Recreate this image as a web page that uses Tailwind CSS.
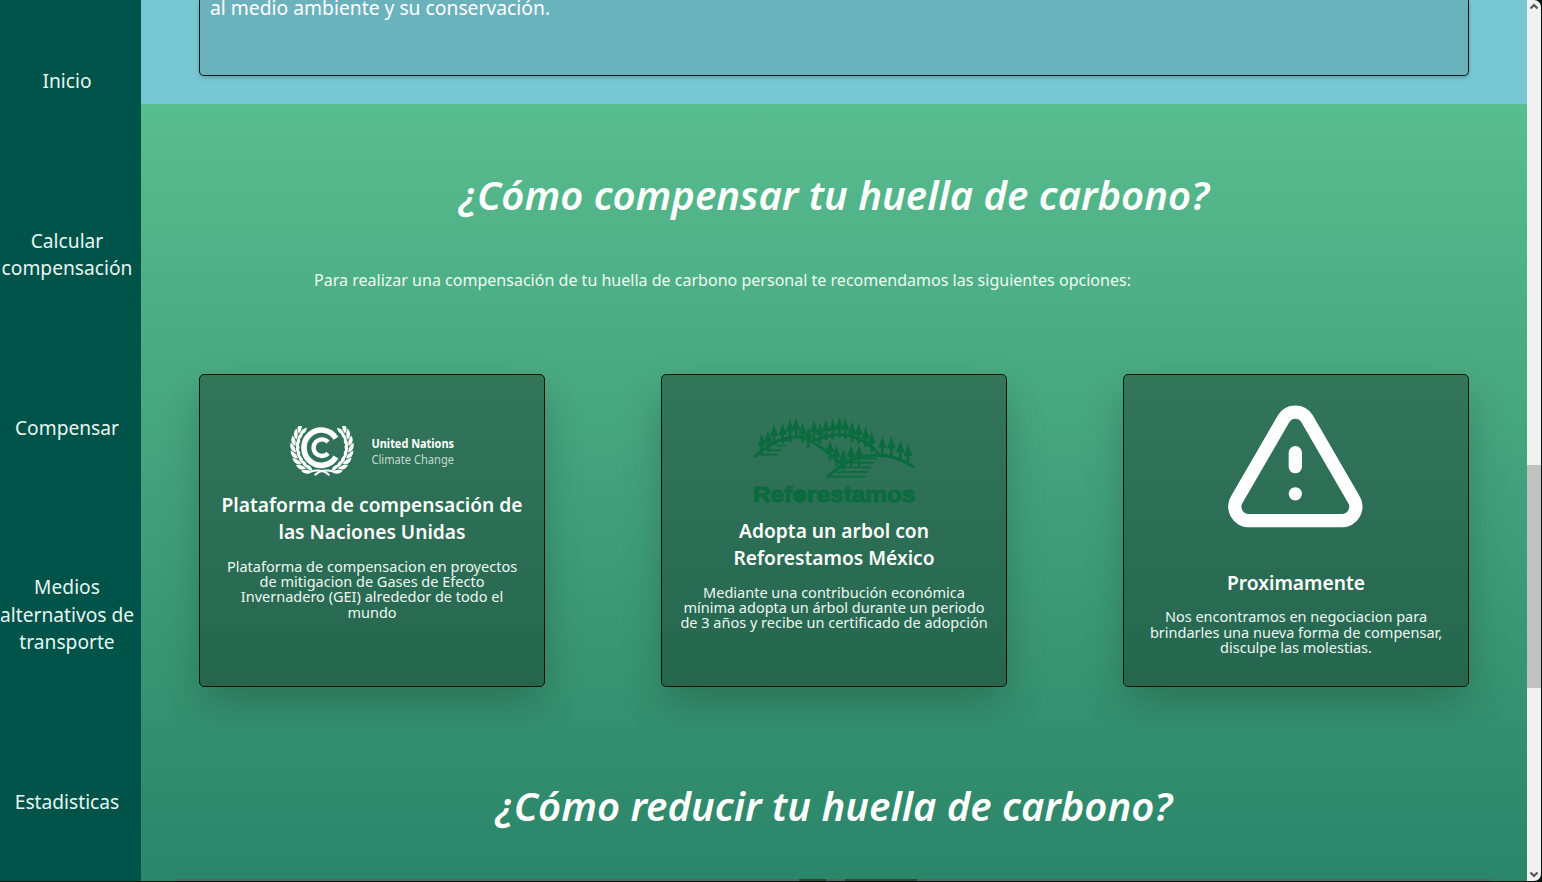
<!DOCTYPE html>
<html lang="es">
<head>
<meta charset="utf-8">
<title>Huella de carbono</title>
<script src="https://cdn.jsdelivr.net/npm/@tailwindcss/browser@4"></script>
</head>
<body class="h-[882px] w-[1542px] overflow-hidden bg-[#07120f] pr-px pb-px font-['Noto_Sans',sans-serif] text-white">
<div class="relative flex h-[881px] overflow-hidden">
  <nav class="flex w-[141px] shrink-0 flex-col gap-[132px] bg-[#005349] pt-[67px] pr-[7px] text-center text-[19.2px] leading-[27.5px] whitespace-nowrap text-[#e6f6f3]">
    <a>Inicio</a>
    <a>Calcular<br>compensación</a>
    <a>Compensar</a>
    <a>Medios<br>alternativos de<br>transporte</a>
    <a>Estadisticas</a>
  </nav>

  <main class="flex h-[881px] w-[1386px] shrink-0 flex-col overflow-hidden">
    <section class="h-[104px] shrink-0 bg-[#77c8d3] px-[58px]">
      <div class="flow-root h-[76px] rounded-b-[5px] border border-t-0 border-[#031413] bg-black/10 pl-[10px] shadow-[0_2px_4px_rgba(0,0,0,0.2)]">
        <p class="-mt-[6px] text-[19.3px] leading-7">al medio ambiente y su conservación.</p>
      </div>
    </section>

    <section class="flex h-[777px] shrink-0 flex-col bg-linear-to-b from-[#58bd8f] to-[#2b8569] pt-[66px]">
      <h2 class="text-center text-[40px] leading-[49px] font-semibold italic">¿Cómo compensar tu huella de carbono?</h2>
      <p class="mt-[49px] pl-[173px] text-[16.05px] leading-6 text-[#effaf4]">Para realizar una compensación de tu huella de carbono personal te recomendamos las siguientes opciones:</p>

      <div class="mt-[82px] flex gap-[116px] px-[58px] text-center whitespace-nowrap">
        <article class="h-[313px] w-[346px] rounded-[5px] border border-[#04150f] bg-black/30 shadow-[0_18px_40px_-2px_rgba(0,0,0,0.22)]">
          <div class="flex h-[116px] gap-[18px] pt-[51px] pl-[90px]">
            <svg class="h-[52px] w-[64px]" viewBox="60 47 192 156" fill="none">
              <defs>
                <g id="leaf" fill="#fff">
                  <path d="M-79 11Q-100 4-93-19Q-79-9-79 11Z"/>
                  <path d="M-76 11Q-62 0-71-18Q-83-5-76 11Z"/>
                </g>
                <g id="branch">
                  <use href="#leaf" transform="rotate(38)"/><use href="#leaf" transform="rotate(24)"/><use href="#leaf" transform="rotate(10)"/><use href="#leaf" transform="rotate(-4)"/><use href="#leaf" transform="rotate(-18)"/><use href="#leaf" transform="rotate(-32)"/><use href="#leaf" transform="rotate(-46)"/><use href="#leaf" transform="rotate(-60)"/>
                  <path d="M-36 74Q0 64 22 85" stroke="#fff" stroke-width="6"/>
                </g>
              </defs>
              <path d="M198 84A52 53 0 1 0 198 140" stroke="#fff" stroke-width="17"/>
              <path d="M174 95A25 25 0 1 0 174 129" stroke="#fff" stroke-width="13"/>
              <use href="#branch" transform="translate(156 110)"/>
              <use href="#branch" transform="translate(156 110) scale(-1 1)"/>
            </svg>
            <svg class="h-[50px] w-[86px]" viewBox="0 0 86 50" fill="#fff">
              <text x="-0.5" y="22" font-size="11.6" font-weight="700" textLength="82.5" lengthAdjust="spacingAndGlyphs">United Nations</text>
              <text x="-0.5" y="37.5" font-size="11.8" fill="#c3dcd2" textLength="82.5" lengthAdjust="spacingAndGlyphs">Climate Change</text>
            </svg>
          </div>
          <h3 class="text-[19.2px] leading-[27.3px] font-semibold">Plataforma de compensación de<br>las Naciones Unidas</h3>
          <p class="mt-[13px] text-[14.5px] leading-[15.35px] text-[#edf7f2]">Plataforma de compensacion en proyectos<br>de mitigacion de Gases de Efecto<br>Invernadero (GEI) alrededor de todo el<br>mundo</p>
        </article>

        <article class="h-[313px] w-[346px] rounded-[5px] border border-[#04150f] bg-black/30 shadow-[0_18px_40px_-2px_rgba(0,0,0,0.22)]">
          <div class="flex h-[142px] pt-[30px] pl-[78px]">
            <svg class="h-[110px] w-[190px]" viewBox="0 0 570 330" fill="#0a6b3e" stroke="#0a6b3e">
              <defs>
                <path id="tree" stroke="none" d="M0 0Q5 18 13 36H4V62H-4V36H-13Q-5 18 0 0Z"/>
              </defs>
              <g fill="none" stroke-width="9">
                <path d="M42 157Q110 95 170 95Q215 96 305 178"/>
                <path d="M225 107Q300 70 365 106Q395 124 418 146"/>
                <path d="M260 218Q300 178 350 160Q435 130 523 187"/>
              </g>
              <path fill="none" stroke-width="5" d="M128 108h30M108 122h30M84 136h38M60 149h52M348 160h64M328 173h75M308 187h84M288 201h97M262 215h114"/>
              <use href="#tree" x="65" y="86"/><use href="#tree" x="84" y="76"/><use href="#tree" x="102" y="58"/><use href="#tree" x="128" y="54"/><use href="#tree" x="150" y="43"/><use href="#tree" x="168" y="38"/><use href="#tree" x="188" y="52"/><use href="#tree" x="205" y="66"/><use href="#tree" x="222" y="46"/><use href="#tree" x="240" y="54"/><use href="#tree" x="258" y="43"/><use href="#tree" x="278" y="41"/><use href="#tree" x="298" y="36"/><use href="#tree" x="316" y="39"/><use href="#tree" x="336" y="50"/><use href="#tree" x="356" y="54"/><use href="#tree" x="377" y="65"/><use href="#tree" x="395" y="79"/>
              <use href="#tree" x="270" y="106"/><use href="#tree" x="289" y="120"/><use href="#tree" x="310" y="132"/><use href="#tree" x="333" y="120"/><use href="#tree" x="357" y="120"/>
              <use href="#tree" x="427" y="92"/><use href="#tree" x="454" y="94"/><use href="#tree" x="481" y="106"/><use href="#tree" x="504" y="116"/>
              <text x="39" y="290" font-family="Liberation Sans, sans-serif" font-weight="700" font-size="67" stroke-width="3" textLength="487" lengthAdjust="spacingAndGlyphs">Reforestamos</text>
              <path stroke="none" d="M160 262Q170 266 174 260Q178 246 188 254Q184 264 178 266Q186 268 190 262V282Q174 296 162 282Z"/>
            </svg>
          </div>
          <h3 class="text-[19.2px] leading-[27.3px] font-semibold">Adopta un arbol con<br>Reforestamos México</h3>
          <p class="mt-[13px] text-[14.5px] leading-[15.35px] text-[#edf7f2]">Mediante una contribución económica<br>mínima adopta un árbol durante un periodo<br>de 3 años y recibe un certificado de adopción</p>
        </article>

        <article class="h-[313px] w-[346px] rounded-[5px] border border-[#04150f] bg-black/30 shadow-[0_18px_40px_-2px_rgba(0,0,0,0.22)]">
          <div class="flex h-[194px] pt-[15px] pl-[86px]">
            <svg class="h-[150px] w-[170px]" viewBox="0 0 510 450" fill="none" stroke="#fff" stroke-width="40" stroke-linecap="round" stroke-linejoin="round">
              <path d="M221 86L82 326A42 42 0 0 0 118 392H394A42 42 0 0 0 430 326L291 86A41 41 0 0 0 221 86Z"/>
              <path d="M256 188V230M256 311.500V311.510"/>
            </svg>
          </div>
          <h3 class="text-[19.2px] leading-[27.3px] font-semibold">Proximamente</h3>
          <p class="mt-[13px] text-[14.5px] leading-[15.35px] text-[#edf7f2]">Nos encontramos en negociacion para<br>brindarles una nueva forma de compensar,<br>disculpe las molestias.</p>
        </article>
      </div>

      <h2 class="mt-[94px] text-center text-[40px] leading-[49px] font-semibold italic">¿Cómo reducir tu huella de carbono?</h2>
      <div class="mt-auto mr-[35px] ml-[35px] flex h-[2px] shrink-0 bg-[#4b6a60]">
        <div class="ml-[623px] w-[27px] bg-[#2b4a2f]"></div>
        <div class="ml-[19px] w-[72px] bg-[#2b4a3a]"></div>
      </div>
    </section>
  </main>

  <div class="flex w-[14px] shrink-0 bg-[#07120f]">
    <div class="flex w-[14px] flex-col items-center overflow-hidden rounded-r-[7px] bg-[#f1f1f1]">
      <svg class="mt-[2px] h-[9px] w-[10px] shrink-0" viewBox="0 0 10 9" fill="none" stroke="#555" stroke-width="2.2"><path d="M1.500 6.500L5 3L8.500 6.500"/></svg>
      <div class="mt-[454px] h-[223px] w-full shrink-0 bg-[#c1c1c1]"></div>
      <svg class="mt-auto mb-[2px] h-[9px] w-[10px] shrink-0" viewBox="0 0 10 9" fill="none" stroke="#555" stroke-width="2.200"><path d="M1.500 2.500L5 6L8.500 2.500"/></svg>
    </div>
  </div>
</div>
</body>
</html>
